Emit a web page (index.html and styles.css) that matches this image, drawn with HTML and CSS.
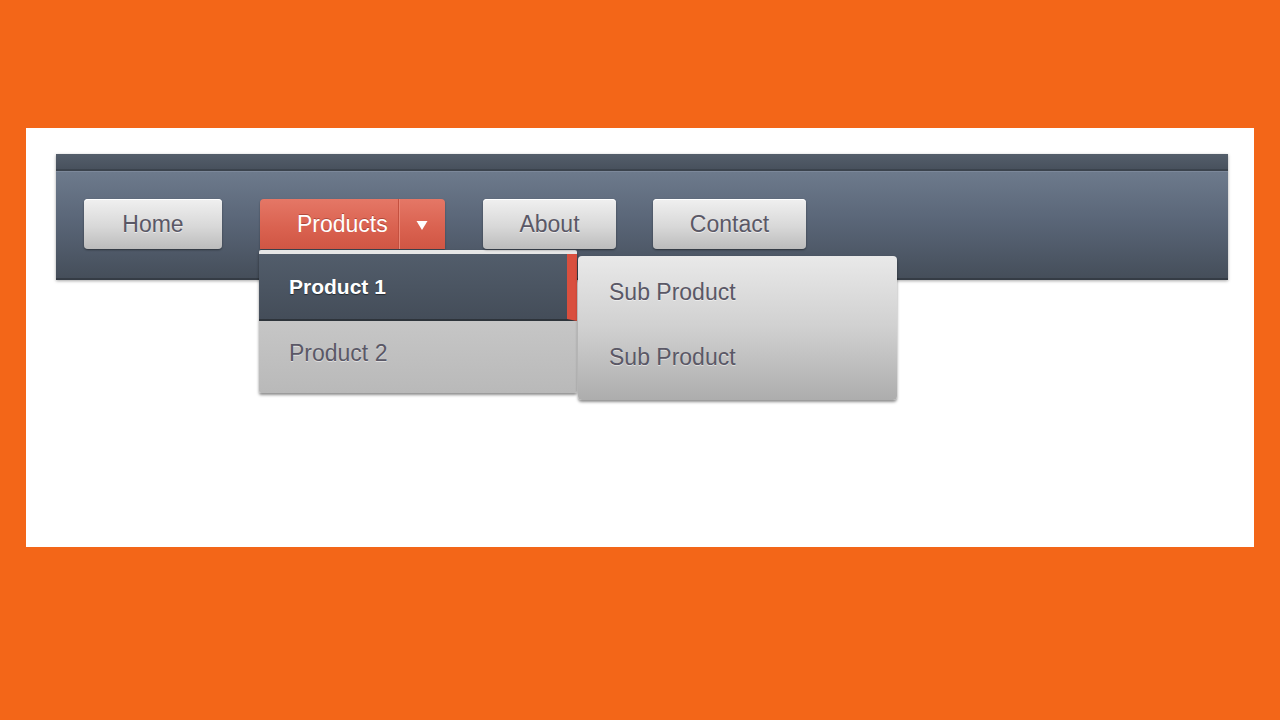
FILE: index.html
```html
<!DOCTYPE html>
<html>
<head>
<meta charset="utf-8">
<link rel="stylesheet" href="styles.css">
</head>
<body>
<div class="panel">
  <nav class="navbar">
    <div class="nav-top"></div>
    <ul class="nav-items">
      <li class="btn btn-home"><span>Home</span></li>
      <li class="btn btn-products">
        <span class="prod-label">Products</span>
        <span class="caret-box"><svg width="12" height="11" viewBox="0 0 12 11"><path d="M0.5 1 L11.5 1 L6 10 Z" fill="#fff"/></svg></span>
        <div class="dropdown">
          <div class="dd-item dd-active">Product 1</div>
          <div class="dd-item dd-normal">Product 2</div>
          <div class="submenu">
            <div class="sub-item">Sub Product</div>
            <div class="sub-item">Sub Product</div>
          </div>
        </div>
      </li>
      <li class="btn btn-about"><span>About</span></li>
      <li class="btn btn-contact"><span>Contact</span></li>
    </ul>
  </nav>
</div>
</body>
</html>
```

FILE: styles.css
```css
html, body {
  margin: 0;
  padding: 0;
}
body {
  background: #f36618;
  width: 1280px;
  height: 720px;
  padding-top: 128px;
  box-sizing: border-box;
  font-family: "Liberation Sans", Arial, sans-serif;
}
.panel {
  margin-left: 26px;
  width: 1228px;
  height: 419px;
  background: #ffffff;
  padding: 26px 0 0 30px;
  box-sizing: border-box;
}
.navbar {
  width: 1172px;
  box-shadow: 0 1px 3px rgba(0,0,0,0.35);
}
.nav-top {
  height: 15px;
  background: linear-gradient(#545e6b, #48515d);
  border-bottom: 2px solid #3b434d;
}
.nav-items {
  list-style: none;
  margin: 0;
  height: 109px;
  padding: 27px 0 0 28px;
  box-sizing: border-box;
  display: flex;
  align-items: flex-start;
  gap: 38px;
  background: linear-gradient(#6d7a8c, #5a6678 45%, #454e5a);
  border-top: 1px solid #7c889a;
  border-bottom: 2px solid #353c45;
}
.btn {
  position: relative;
  height: 50px;
  border-radius: 4px;
  font-size: 23px;
  display: flex;
  align-items: center;
  justify-content: center;
  box-sizing: border-box;
  color: #5a5866;
  text-shadow: 0 1px 0 rgba(255,255,255,0.6);
  background: linear-gradient(#f0f0f0, #d8d8d8 55%, #bcbcbc);
  box-shadow: 0 1px 2px rgba(0,0,0,0.45), inset 0 1px 0 #ffffff;
}
.btn-home { width: 138px; }
.btn-about { width: 133px; }
.btn-contact { width: 153px; margin-left: -1px; }
.btn-products {
  width: 185px;
  justify-content: flex-start;
  padding-left: 37px;
  color: #ffffff;
  text-shadow: 0 -1px 0 rgba(120,30,20,0.45);
  background: linear-gradient(#e57766, #d9614f 60%, #cf5644);
  box-shadow: 0 1px 2px rgba(0,0,0,0.35);
  border-radius: 4px 4px 0 0;
}
.prod-label {
  margin-right: 10px;
}
.caret-box {
  height: 100%;
  width: 47px;
  border-left: 1px solid #c4503f;
  box-shadow: inset 1px 0 0 #e88676;
  display: flex;
  align-items: center;
  justify-content: center;
}
.caret-box svg {
  margin-top: 2px;
}
.dropdown {
  position: absolute;
  left: -1px;
  top: 51px;
  width: 318px;
  background: linear-gradient(#d2d2d2, #b9b9b9);
  border-top: 4px solid #e6e6e6;
  border-radius: 2px;
  box-shadow: 0 2px 3px rgba(0,0,0,0.45);
  padding-bottom: 7px;
  text-shadow: none;
}
.dd-item {
  height: 65px;
  display: flex;
  align-items: center;
  padding-left: 30px;
  font-size: 23px;
  box-sizing: border-box;
}
.dd-active {
  font-weight: bold;
  font-size: 21px;
  color: #ffffff;
  background: linear-gradient(#525d6b, #444d59);
  border-right: 10px solid #d94f3e;
  border-bottom: 2px solid #2e343b;
  height: 67px;
  text-shadow: 0 1px 1px rgba(0,0,0,0.5);
}
.dd-normal {
  color: #5a5866;
  text-shadow: 0 1px 0 rgba(255,255,255,0.5);
}
.submenu {
  position: absolute;
  left: 319px;
  top: 2px;
  width: 319px;
  height: 144px;
  border-radius: 4px;
  background: linear-gradient(#e9e9e9, #d0d0d0 50%, #adadad);
  box-shadow: 0 2px 3px rgba(0,0,0,0.45);
  padding-top: 4px;
  box-sizing: border-box;
}
.sub-item {
  height: 65px;
  display: flex;
  align-items: center;
  padding-left: 31px;
  font-size: 23px;
  color: #5a5866;
  text-shadow: 0 1px 0 rgba(255,255,255,0.5);
}
```
